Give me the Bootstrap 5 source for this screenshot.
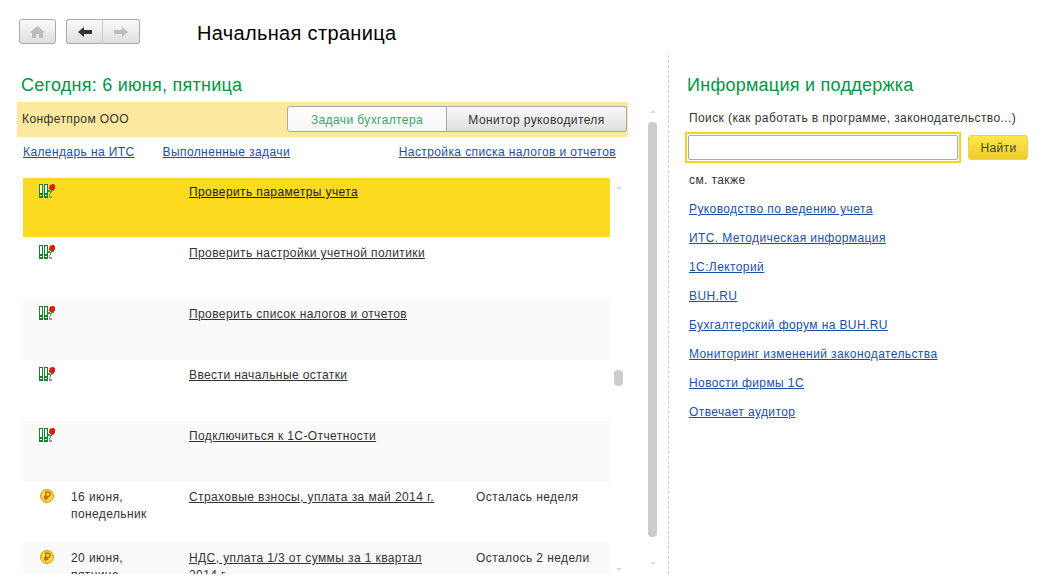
<!DOCTYPE html>
<html lang="ru">

<head>
    <meta charset="UTF-8">
    <meta name="viewport" content="width=device-width, initial-scale=1">
    <title>Начальная страница</title>
    <link href="https://cdn.jsdelivr.net/npm/bootstrap@5.3.0/dist/css/bootstrap.min.css" rel="stylesheet">
    <style>
        body {
            font-family: "Liberation Sans", Arial, sans-serif;
            font-size: 12px;
            line-height: 17px;
            letter-spacing: .4px;
            color: #333;
            background: #fff;
            height: 587px;
            overflow: hidden;
        }

        a {
            color: #1a4fa8;
        }

        .top-bar {
            height: 55px;
            padding: 19px 0 0 19px;
        }

        .nav-btn {
            width: 37px;
            height: 25px;
            border: 1px solid #aaa;
            border-radius: 3px;
            background: linear-gradient(#fafafa, #dedede);
            display: flex;
            align-items: center;
            justify-content: center;
        }

        .nav-pair {
            margin-left: 10px;
        }

        .nav-pair .nav-btn:first-child {
            border-right-color: #ccc;
            border-radius: 3px 0 0 3px;
        }

        .nav-pair .nav-btn:last-child {
            border-left: 0;
            border-radius: 0 3px 3px 0;
        }

        .page-title {
            font-size: 20px;
            line-height: 28px;
            letter-spacing: .33px;
            color: #000;
            margin: 0 0 0 57px;
            font-weight: 400;
        }

        .left-pane {
            width: 669px;
            height: 519px;
            border-right: 1px dashed #ccc;
            padding-left: 17px;
        }

        .section-title {
            font-size: 18px;
            line-height: 22px;
            letter-spacing: .25px;
            color: #009646;
            font-weight: 400;
            margin: 19px 0 0;
        }

        .org-band {
            width: 611px;
            height: 35px;
            background: #fce89e;
            padding: 4px 1px 0 5px;
            margin-top: 6px;
        }

        .org-name {
            padding-top: 5px;
        }

        .seg-btn {
            height: 26px;
            border: 1px solid #a8a8a8;
            line-height: 26px;
            text-align: center;
        }

        .seg-on {
            width: 160px;
            color: #3aa668;
            background: linear-gradient(#fff, #f6f6f6);
            border-radius: 3px 0 0 3px;
        }

        .seg-off {
            width: 180px;
            border-left: 0;
            color: #333;
            background: linear-gradient(#fafafa, #dedede);
            border-radius: 0 3px 3px 0;
        }

        .quick-links {
            width: 593px;
            margin: 7px 0 0 6px;
            height: 34px;
        }

        .task-area {
            height: 396px;
        }

        .task-scroll {
            width: 587px;
            height: 396px;
            margin-left: 6px;
            overflow: hidden;
        }

        .task-row {
            height: 61px;
            padding-top: 7px;
        }

        .task-row:nth-child(odd) {
            background: #fafafa;
        }

        .task-row.task-now {
            height: 59px;
            padding-top: 6px;
            background: #fbdb1f;
        }

        .task-now+.task-row {
            height: 62px;
            padding-top: 8px;
        }

        .task-row.task-now a {
            color: #222;
        }

        .task-row a {
            color: #333;
        }

        .col-icon {
            width: 48px;
            flex: none;
            padding-left: 16px;
        }

        .col-icon svg {
            display: block;
        }

        .col-coin {
            padding-left: 17px;
        }

        .col-date {
            width: 118px;
            flex: none;
        }

        .col-name {
            width: 287px;
            flex: none;
            padding-right: 35px;
        }

        .track {
            position: relative;
            width: 10px;
        }

        .track-inner {
            margin-left: 4px;
        }

        .track-outer {
            margin-left: 20px;
        }

        .thumb {
            position: absolute;
            left: 0;
            width: 9px;
            background: #ccc;
            border-radius: 4px;
        }

        .arr-up,
        .arr-down {
            position: absolute;
            left: 2px;
            width: 0;
            height: 0;
            border-left: 3px solid transparent;
            border-right: 3px solid transparent;
        }

        .arr-up {
            border-bottom: 3px solid #ddd;
        }

        .arr-down {
            border-top: 3px solid #ddd;
        }

        .right-pane {
            flex: 1;
            padding: 0 0 0 18px;
        }

        .search-label {
            margin: 14px 0 0 2px;
        }

        .search-row {
            margin-top: 5px;
        }

        .search-wrap {
            width: 276px;
            height: 31px;
            border: 2px solid #fbcf24;
            padding: 1px;
            margin-left: -2px;
        }

        .search-input {
            display: block;
            width: 100%;
            height: 100%;
            border: 1px solid #aaa;
            border-radius: 2px;
            outline: 0;
        }

        .find-btn {
            width: 60px;
            height: 25px;
            margin-left: 7px;
            border: 1px solid #f0d24a;
            border-radius: 3px;
            background: linear-gradient(#fde84a, #efcb2c);
            color: #444;
            font-size: 12px;
            letter-spacing: .4px;
            padding: 1px 0 0 1px;
        }

        .see-also {
            margin: 9px 0 12px 2px;
        }

        .info-links a {
            display: block;
            height: 29px;
            margin-left: 2px;
        }
    </style>
</head>

<body>
    <svg width="0" height="0" class="position-absolute">
        <symbol id="i-task" viewBox="0 0 16 14">
            <path fill="#14832f" d="M0 0h4v14H0zM5 0h4v14H5z" />
            <path fill="#fff" d="M1 1h2v8H1zM6 1h2v8H6zM1 11h2v1H1zM6 11h2v1H6z" />
            <path fill="#e01a10" d="M10 1h1V0h4v1h1v4h-1v1h-4V5h-1z" />
            <path fill="#f7941d" d="M10 1h1v2h-1zM11 0h2v1h-2z" />
            <path fill="#3f9b3a" d="M9 6h2v1h1V6h3v1h-2v1h-1v2h-1V8H9z" />
            <path fill="#999" d="M10 10h1v2h2v2h-3z" />
        </symbol>
        <symbol id="i-coin" viewBox="0 0 14 14">
            <circle cx="7" cy="7" r="6.500" fill="#fcd116" stroke="#e09a10" />
            <circle cx="7" cy="7" r="4.800" fill="#fbe05a" />
            <path fill="none" stroke="#b0720c" stroke-width="1.400" d="M5.800 11.200V3.200h2.200a2.100 2.100 0 0 1 0 4.300H3.900M3.900 9.300h4.500" />
        </symbol>
    </svg>

    <div class="top-bar d-flex align-items-start">
        <div class="nav-btn">
            <svg width="15" height="12" viewBox="0 0 15 12">
                <path fill="#bbb" d="M7.500 0 15 6.500h-2V12H9V8H6v4H2V6.500H0z" />
            </svg>
        </div>
        <div class="nav-pair d-flex">
            <div class="nav-btn">
                <svg width="14" height="10" viewBox="0 0 14 10">
                    <path fill="#333" d="M0 5 6 0v3h8v4H6v3z" />
                </svg>
            </div>
            <div class="nav-btn">
                <svg width="14" height="10" viewBox="0 0 14 10">
                    <path fill="#bbb" d="M14 5 8 0v3H0v4h8v3z" />
                </svg>
            </div>
        </div>
        <h1 class="page-title">Начальная страница</h1>
    </div>

    <div class="d-flex">
        <div class="left-pane">
            <div class="d-flex">
                <div>
                    <h2 class="section-title ps-1">Сегодня: 6 июня, пятница</h2>
                    <div class="org-band d-flex justify-content-between align-items-start">
                        <span class="org-name">Конфетпром ООО</span>
                        <div class="d-flex">
                            <div class="seg-btn seg-on">Задачи бухгалтера</div>
                            <div class="seg-btn seg-off">Монитор руководителя</div>
                        </div>
                    </div>
                    <div class="quick-links d-flex">
                        <a href="#">Календарь на ИТС</a>
                        <a href="#" class="ms-4 ps-1">Выполненные задачи</a>
                        <a href="#" class="ms-auto">Настройка списка налогов и отчетов</a>
                    </div>
                    <div class="task-area d-flex">
                        <div class="task-scroll">
                            <div class="task-row task-now d-flex">
                                <div class="col-icon"><svg width="16" height="14"><use href="#i-task" /></svg></div>
                                <div class="col-date"></div>
                                <div class="col-name"><a href="#">Проверить параметры учета</a></div>
                            </div>
                            <div class="task-row d-flex">
                                <div class="col-icon"><svg width="16" height="14"><use href="#i-task" /></svg></div>
                                <div class="col-date"></div>
                                <div class="col-name"><a href="#">Проверить настройки учетной политики</a></div>
                            </div>
                            <div class="task-row d-flex">
                                <div class="col-icon"><svg width="16" height="14"><use href="#i-task" /></svg></div>
                                <div class="col-date"></div>
                                <div class="col-name"><a href="#">Проверить список налогов и отчетов</a></div>
                            </div>
                            <div class="task-row d-flex">
                                <div class="col-icon"><svg width="16" height="14"><use href="#i-task" /></svg></div>
                                <div class="col-date"></div>
                                <div class="col-name"><a href="#">Ввести начальные остатки</a></div>
                            </div>
                            <div class="task-row d-flex">
                                <div class="col-icon"><svg width="16" height="14"><use href="#i-task" /></svg></div>
                                <div class="col-date"></div>
                                <div class="col-name"><a href="#">Подключиться к 1С-Отчетности</a></div>
                            </div>
                            <div class="task-row d-flex">
                                <div class="col-icon col-coin"><svg width="14" height="14"><use href="#i-coin" /></svg></div>
                                <div class="col-date">16 июня,<br>понедельник</div>
                                <div class="col-name"><a href="#">Страховые взносы, уплата за май 2014 г.</a></div>
                                <div>Осталась неделя</div>
                            </div>
                            <div class="task-row d-flex">
                                <div class="col-icon col-coin"><svg width="14" height="14"><use href="#i-coin" /></svg></div>
                                <div class="col-date">20 июня,<br>пятница</div>
                                <div class="col-name"><a href="#">НДС, уплата 1/3 от суммы за 1 квартал 2014 г.</a></div>
                                <div>Осталось 2 недели</div>
                            </div>
                        </div>
                        <div class="track track-inner">
                            <span class="arr-up" style="top:8px"></span>
                            <span class="thumb" style="top:192px;height:16px"></span>
                            <span class="arr-down" style="top:390px"></span>
                        </div>
                    </div>
                </div>
                <div class="track track-outer">
                    <span class="arr-up" style="top:55px"></span>
                    <span class="thumb" style="top:67px;height:415px"></span>
                    <span class="arr-down" style="top:507px"></span>
                </div>
            </div>
        </div>

        <div class="right-pane">
            <h2 class="section-title">Информация и поддержка</h2>
            <div class="search-label">Поиск (как работать в программе, законодательство...)</div>
            <div class="search-row d-flex align-items-center">
                <div class="search-wrap"><input class="search-input" type="text"></div>
                <button class="find-btn" type="button">Найти</button>
            </div>
            <div class="see-also">см. также</div>
            <div class="info-links">
                <a href="#">Руководство по ведению учета</a>
                <a href="#">ИТС. Методическая информация</a>
                <a href="#">1С:Лекторий</a>
                <a href="#">BUH.RU</a>
                <a href="#">Бухгалтерский форум на BUH.RU</a>
                <a href="#">Мониторинг изменений законодательства</a>
                <a href="#">Новости фирмы 1С</a>
                <a href="#">Отвечает аудитор</a>
            </div>
        </div>
    </div>

    <script src="https://cdn.jsdelivr.net/npm/bootstrap@5.3.0/dist/js/bootstrap.bundle.min.js"></script>
</body>

</html>
